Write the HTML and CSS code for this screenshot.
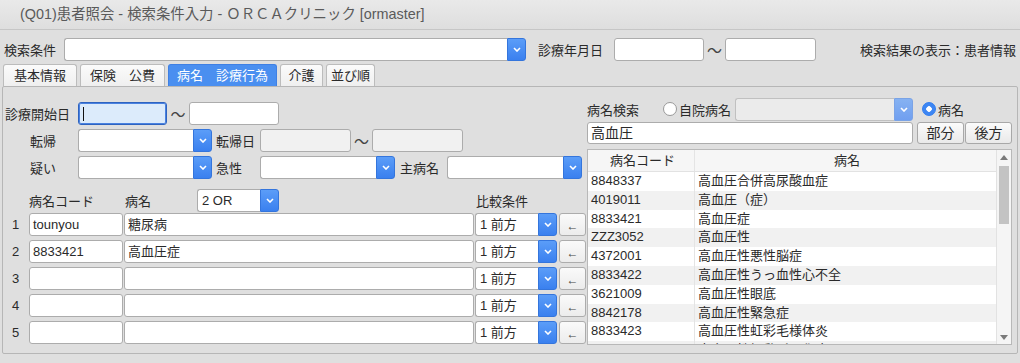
FILE: index.html
```html
<!DOCTYPE html>
<html lang="ja">
<head>
    <meta charset="UTF-8">
    <title>(Q01)患者照会 - 検索条件入力</title>
    <link rel="stylesheet" href="styles.css">
</head>
<body>
    <div class="titlebar">(Q01)患者照会 - 検索条件入力 - ＯＲＣＡクリニック [ormaster]</div>

    <div class="toprow">
        <span class="lbl w60">検索条件</span>
        <div class="combo w462"><div class="field"></div><div class="drop"><svg viewBox="0 0 8 5"><path d="M1 1l3 3 3-3"/></svg></div></div>
        <span class="lbl w76 ml12">診療年月日</span>
        <div class="entry w90"></div>
        <span class="tilde w21">〜</span>
        <div class="entry w91"></div>
        <span class="grow"></span>
        <span class="lbl result">検索結果の表示：患者情報</span>
    </div>

    <div class="tabs">
        <div class="tab t1">基本情報</div>
        <div class="tab t2">保険　公費</div>
        <div class="tab t3 active">病名　診療行為</div>
        <div class="tab t4">介護</div>
        <div class="tab t5">並び順</div>
    </div>

    <div class="panel">
        <div class="left">
            <div class="filters">
                <div class="frow">
                    <span class="lbl w75">診療開始日</span>
                    <div class="entry w89 focused"><span class="caret"></span></div>
                    <span class="tilde w22">〜</span>
                    <div class="entry w90"></div>
                </div>
                <div class="frow">
                    <span class="lbl w75 indent">転帰</span>
                    <div class="combo w134"><div class="field"></div><div class="drop"><svg viewBox="0 0 8 5"><path d="M1 1l3 3 3-3"/></svg></div></div>
                    <span class="lbl w44 ml4">転帰日</span>
                    <div class="entry w91 disabled"></div>
                    <span class="tilde w21">〜</span>
                    <div class="entry w91 disabled"></div>
                </div>
                <div class="frow">
                    <span class="lbl w75 indent">疑い</span>
                    <div class="combo w134"><div class="field"></div><div class="drop"><svg viewBox="0 0 8 5"><path d="M1 1l3 3 3-3"/></svg></div></div>
                    <span class="lbl w44 ml4">急性</span>
                    <div class="combo w135"><div class="field"></div><div class="drop"><svg viewBox="0 0 8 5"><path d="M1 1l3 3 3-3"/></svg></div></div>
                    <span class="lbl w47 ml5">主病名</span>
                    <div class="combo w135"><div class="field"></div><div class="drop"><svg viewBox="0 0 8 5"><path d="M1 1l3 3 3-3"/></svg></div></div>
                </div>
            </div>

            <div class="hrow">
                <span class="w26"></span>
                <span class="lbl w96">病名コード</span>
                <span class="lbl w72">病名</span>
                <div class="combo w82"><div class="field">2 OR</div><div class="drop"><svg viewBox="0 0 8 5"><path d="M1 1l3 3 3-3"/></svg></div></div>
                <span class="lbl cmp">比較条件</span>
            </div>

            <div class="drows">
                <div class="drow">
                    <span class="num">1</span>
                    <div class="entry w94">tounyou</div>
                    <div class="entry w350 ml1">糖尿病</div>
                    <div class="combo w82 ml1"><div class="field">1 前方</div><div class="drop"><svg viewBox="0 0 8 5"><path d="M1 1l3 3 3-3"/></svg></div></div>
                    <div class="arrow">←</div>
                </div>
                <div class="drow">
                    <span class="num">2</span>
                    <div class="entry w94">8833421</div>
                    <div class="entry w350 ml1">高血圧症</div>
                    <div class="combo w82 ml1"><div class="field">1 前方</div><div class="drop"><svg viewBox="0 0 8 5"><path d="M1 1l3 3 3-3"/></svg></div></div>
                    <div class="arrow">←</div>
                </div>
                <div class="drow">
                    <span class="num">3</span>
                    <div class="entry w94"></div>
                    <div class="entry w350 ml1"></div>
                    <div class="combo w82 ml1"><div class="field">1 前方</div><div class="drop"><svg viewBox="0 0 8 5"><path d="M1 1l3 3 3-3"/></svg></div></div>
                    <div class="arrow">←</div>
                </div>
                <div class="drow">
                    <span class="num">4</span>
                    <div class="entry w94"></div>
                    <div class="entry w350 ml1"></div>
                    <div class="combo w82 ml1"><div class="field">1 前方</div><div class="drop"><svg viewBox="0 0 8 5"><path d="M1 1l3 3 3-3"/></svg></div></div>
                    <div class="arrow">←</div>
                </div>
                <div class="drow">
                    <span class="num">5</span>
                    <div class="entry w94"></div>
                    <div class="entry w350 ml1"></div>
                    <div class="combo w82 ml1"><div class="field">1 前方</div><div class="drop"><svg viewBox="0 0 8 5"><path d="M1 1l3 3 3-3"/></svg></div></div>
                    <div class="arrow">←</div>
                </div>
            </div>
        </div>

        <div class="right">
            <div class="srow">
                <span class="lbl w76">病名検索</span>
                <span class="radio"></span>
                <span class="lbl rlbl">自院病名</span>
                <div class="combo w178 off"><div class="field"></div><div class="drop"><svg viewBox="0 0 8 5"><path d="M1 1l3 3 3-3"/></svg></div></div>
                <span class="radio on"></span>
                <span class="lbl rlbl">病名</span>
            </div>
            <div class="srow2">
                <div class="entry w326 big">高血圧</div>
                <div class="btn">部分</div>
                <div class="btn">後方</div>
            </div>
            <div class="list">
                <div class="list-body">
                    <div class="lhead">
                        <span class="c1">病名コード</span>
                        <span class="c2">病名</span>
                    </div>
                    <div class="litem"><span class="c1">8848337</span><span class="c2">高血圧合併高尿酸血症</span></div>
                    <div class="litem"><span class="c1">4019011</span><span class="c2">高血圧（症）</span></div>
                    <div class="litem"><span class="c1">8833421</span><span class="c2">高血圧症</span></div>
                    <div class="litem"><span class="c1">ZZZ3052</span><span class="c2">高血圧性</span></div>
                    <div class="litem"><span class="c1">4372001</span><span class="c2">高血圧性悪性脳症</span></div>
                    <div class="litem"><span class="c1">8833422</span><span class="c2">高血圧性うっ血性心不全</span></div>
                    <div class="litem"><span class="c1">3621009</span><span class="c2">高血圧性眼底</span></div>
                    <div class="litem"><span class="c1">8842178</span><span class="c2">高血圧性緊急症</span></div>
                    <div class="litem"><span class="c1">8833423</span><span class="c2">高血圧性虹彩毛様体炎</span></div>
                    <div class="litem"><span class="c1">4020001</span><span class="c2">高血圧性細動脈硬化症</span></div>
                </div>
                <div class="scroll">
                    <svg class="sarrow" viewBox="0 0 8 5"><path d="M0 5L4 0 8 5z"/></svg>
                    <div class="thumb"></div>
                    <span class="grow"></span>
                    <svg class="sarrow" viewBox="0 0 8 5"><path d="M0 0L4 5 8 0z"/></svg>
                </div>
            </div>
        </div>
    </div>
</body>
</html>
```

FILE: styles.css
```css
* {
    box-sizing: border-box;
}
body {
    margin: 0;
    width: 1020px;
    height: 363px;
    overflow: hidden;
    background: #dfdfdf;
    font-family: "Liberation Sans", "Noto Sans CJK JP", sans-serif;
    font-size: 13px;
    color: #2a2a2a;
}
.titlebar {
    height: 30px;
    line-height: 29px;
    padding-left: 20px;
    border-bottom: 1px solid #c6c6c6;
    background: linear-gradient(#e9e9e9, #dedede);
    font-size: 14.4px;
    color: #5a5a5a;
}

/* generic pieces */
.lbl {
    white-space: nowrap;
    flex: none;
}
.grow {
    flex: 1;
}
.tilde {
    flex: none;
    text-align: center;
    font-size: 15px;
    color: #444;
}
.entry {
    flex: none;
    height: 23px;
    line-height: 21px;
    padding-left: 3px;
    background: #fff;
    border: 1px solid #acacac;
    border-radius: 3px;
    white-space: nowrap;
    overflow: hidden;
}
.entry.disabled {
    background: #f1f1f1;
}
.entry.focused {
    background: #dcebfb;
    border: 1px solid #2e63c0;
    box-shadow: inset 0 0 0 1px #4a82e0;
    position: relative;
}
.caret {
    position: absolute;
    left: 4px;
    top: 4px;
    width: 1px;
    height: 14px;
    background: #111;
}
.entry.big {
    font-size: 14px;
}
.combo {
    flex: none;
    display: flex;
    height: 23px;
}
.combo .field {
    flex: 1;
    line-height: 21px;
    padding-left: 4px;
    background: #fff;
    border: 1px solid #acacac;
    border-right: none;
    border-radius: 3px 0 0 3px;
    white-space: nowrap;
}
.combo .drop {
    width: 19px;
    display: flex;
    align-items: center;
    justify-content: center;
    background: linear-gradient(#5b9df8, #3a80ef);
    border: 1px solid #3475dc;
    border-radius: 0 3px 3px 0;
}
.combo .drop svg {
    width: 8px;
    height: 5px;
    fill: none;
    stroke: #fff;
    stroke-width: 1.6;
}
.combo.off .field {
    background: #ebebeb;
    border-color: #c0c0c0;
}
.combo.off .drop {
    background: linear-gradient(#86b2f2, #709ff0);
    border-color: #7aa3e6;
}

/* widths */
.w21 { width: 21px; }
.w22 { width: 22px; }
.w26 { width: 26px; flex: none; }
.w44 { width: 44px; }
.w47 { width: 47px; }
.w60 { width: 60px; }
.w72 { width: 72px; }
.w75 { width: 75px; }
.w76 { width: 76px; }
.w82 { width: 82px; }
.w89 { width: 89px; }
.w90 { width: 90px; }
.w91 { width: 91px; }
.w94 { width: 94px; }
.w96 { width: 96px; }
.w134 { width: 134px; }
.w135 { width: 135px; }
.w178 { width: 178px; }
.w326 { width: 326px; }
.w350 { width: 350px; }
.w462 { width: 462px; }
.ml1 { margin-left: 1px; }
.ml4 { margin-left: 4px; }
.ml5 { margin-left: 5px; }
.ml12 { margin-left: 12px; }

/* top row */
.toprow {
    display: flex;
    align-items: center;
    height: 23px;
    margin-top: 8px;
    padding-left: 4px;
}
.result {
    padding-right: 4px;
}

/* tabs */
.tabs {
    display: flex;
    gap: 3px;
    height: 22px;
    margin-top: 3px;
    padding-left: 3px;
}
.tab {
    line-height: 21px;
    text-align: center;
    white-space: nowrap;
    background: linear-gradient(#fbfbfb, #efefef);
    border: 1px solid #bcbcbc;
    border-bottom: none;
    border-radius: 3px 3px 0 0;
}
.t1 { width: 74px; }
.t2 { width: 85px; }
.t3 { width: 109px; }
.t4 { width: 43px; }
.t5 { width: 49px; }
.tab.active {
    background: #4a8ff0;
    border-color: #3f80e4;
    color: #fff;
}

/* main panel */
.panel {
    display: flex;
    width: 1016px;
    height: 268px;
    margin-left: 2px;
    border: 1px solid #b6b6b6;
    border-radius: 2px;
}
.left {
    width: 584px;
    padding-top: 15px;
}
.filters {
    display: flex;
    flex-direction: column;
    gap: 4px;
}
.frow {
    display: flex;
    align-items: center;
    height: 23px;
}
.frow .lbl:first-child {
    padding-left: 2px;
}
.frow .lbl.indent:first-child {
    padding-left: 27px;
}
.hrow {
    display: flex;
    align-items: center;
    height: 23px;
    margin-top: 10px;
}
.cmp {
    margin-left: 197px;
}
.drows {
    display: flex;
    flex-direction: column;
    gap: 4px;
    margin-top: 1px;
}
.drow {
    display: flex;
    align-items: center;
    height: 23px;
}
.num {
    width: 26px;
    padding-left: 9px;
    flex: none;
}
.arrow {
    width: 27px;
    height: 23px;
    margin-left: 2px;
    line-height: 24px;
    text-align: center;
    font-size: 12px;
    color: #444;
    background: linear-gradient(#fafafa, #ececec);
    border: 1px solid #acacac;
    border-radius: 3px;
}

/* right side */
.right {
    width: 430px;
    padding: 11px 5px 0 0;
}
.srow {
    display: flex;
    align-items: center;
    height: 22px;
}
.radio {
    flex: none;
    width: 14px;
    height: 14px;
    border: 1px solid #999;
    border-radius: 50%;
    background: #fff;
    margin-right: 2px;
}
.radio.on {
    margin-left: 9px;
    border-color: #2f7cf0;
    background: radial-gradient(circle, #fff 0 2.5px, #3d86f3 3px);
}
.rlbl {
    width: 56px;
}
.srow2 {
    display: flex;
    align-items: center;
    height: 22px;
    margin-top: 2px;
}
.srow2 .entry {
    height: 22px;
    line-height: 20px;
}
.btn {
    width: 48px;
    height: 22px;
    line-height: 20px;
    margin-left: 1px;
    text-align: center;
    font-size: 14px;
    background: linear-gradient(#fbfbfb, #e9e9e9);
    border: 1px solid #a8a8a8;
    border-radius: 3px;
}
.srow2 .btn:nth-child(2) {
    margin-left: 4px;
}
.list {
    display: flex;
    height: 196px;
    margin-top: 5px;
    background: #fff;
    border: 1px solid #b8b8b8;
    overflow: hidden;
}
.list-body {
    flex: 1;
}
.lhead {
    display: flex;
    height: 22px;
    line-height: 21px;
    background: #f6f6f6;
    border-bottom: 1px solid #e2e2e2;
}
.lhead span {
    text-align: center;
}
.c1 {
    width: 107px;
    flex: none;
    padding-left: 3px;
    border-right: 1px solid #e4e4e4;
}
.c2 {
    flex: 1;
    padding-left: 3px;
}
.litem {
    display: flex;
    height: 18.8px;
    line-height: 18px;
    white-space: nowrap;
}
.litem:nth-child(odd) {
    background: #f1f1f1;
}
.scroll {
    width: 15px;
    display: flex;
    flex-direction: column;
    align-items: center;
    padding: 5px 0 4px;
    background: #f5f5f5;
    border-left: 1px solid #e2e2e2;
}
.sarrow {
    width: 8px;
    height: 5px;
    fill: #7a7a7a;
}
.thumb {
    width: 10px;
    height: 58px;
    margin-top: 6px;
    background: #c3c3c3;
}
```
